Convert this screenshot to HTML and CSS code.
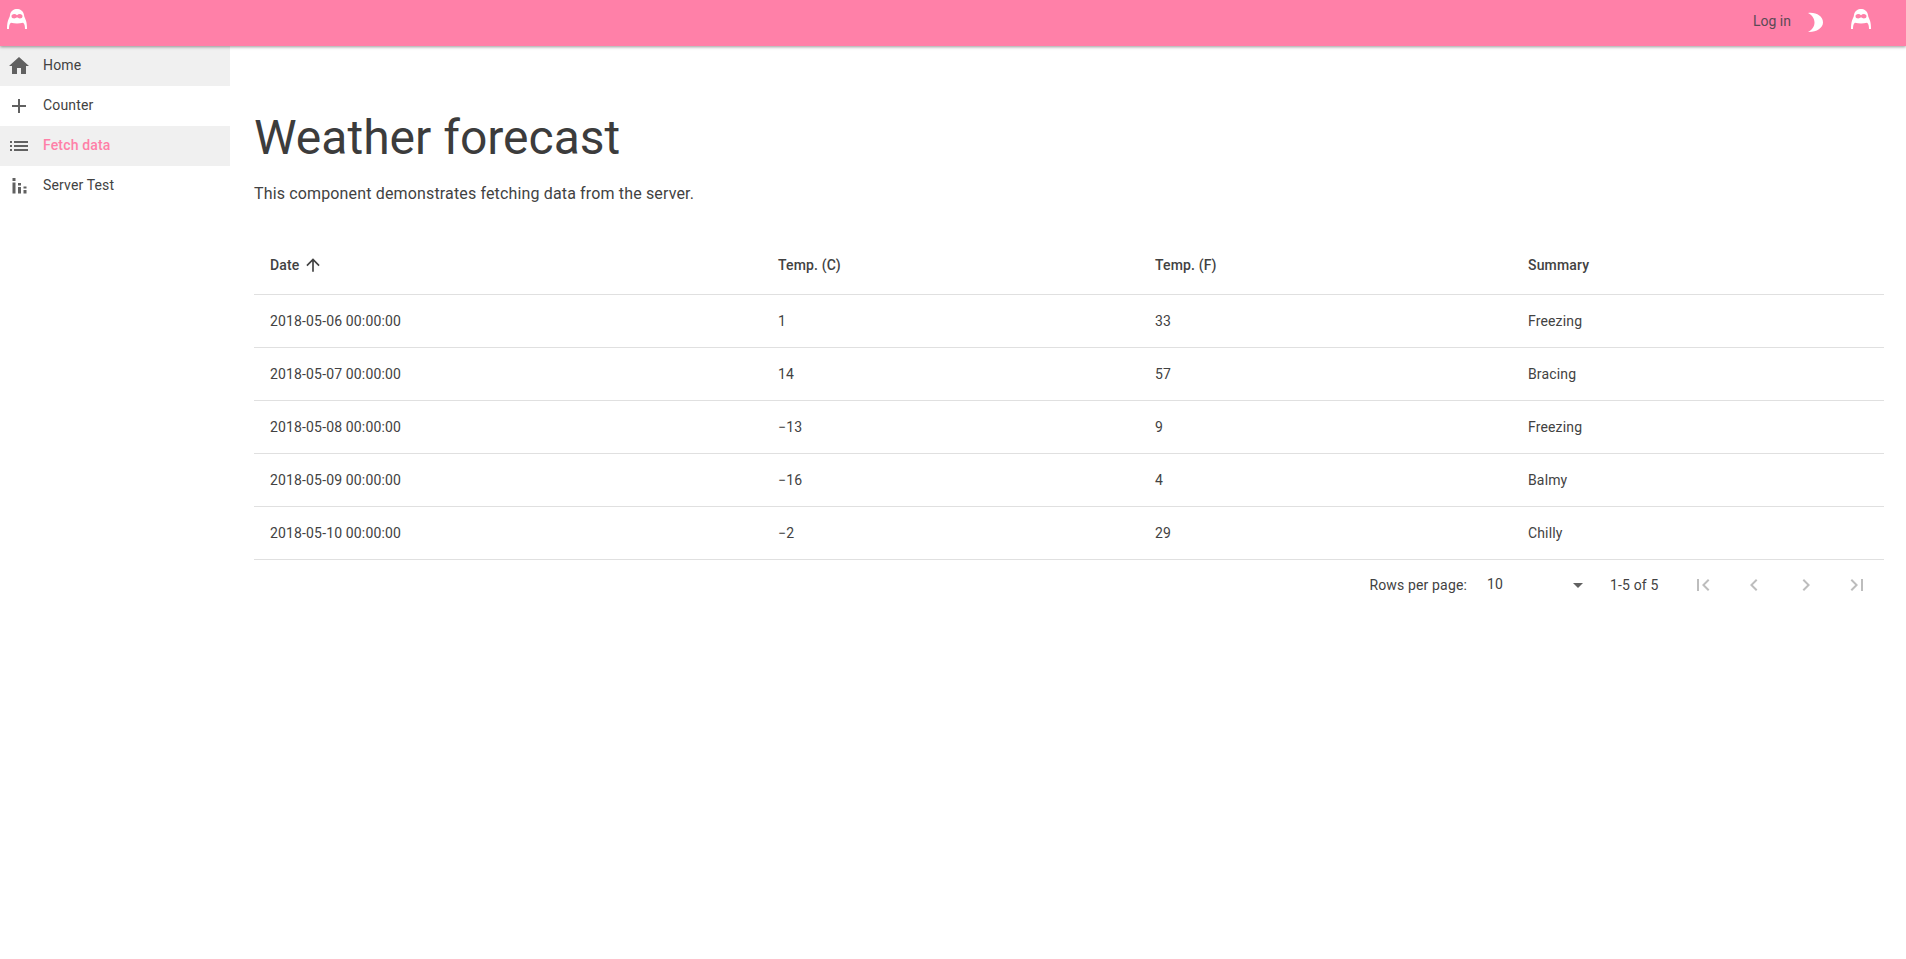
FILE: index.html
```html
<!DOCTYPE html>
<html lang="en">
<head>
  <meta charset="UTF-8" />
  <title>Weather forecast</title>
  <link rel="stylesheet" href="styles.css">
</head>
<body>

  <svg class="defs" width="0" height="0">
    <symbol id="penguin" viewBox="0 0 20 20">
      <path fill="#fff" fill-rule="evenodd" d="M10 0C7 0 3.600 1.800 3 6 2.700 8.300 1.500 10 .9 12 .2 14 0 17 0 20H2C2 17 2.300 15 4 13.700 6 14.300 8 14.500 10 14.500S14 14.300 16 13.700C17.700 15 18 17 18 20H20C20 17 19.800 14 19.100 12 18.500 10 17.300 8.300 17 6 16.400 1.800 13 0 10 0ZM7.200 5C8.200 5 9.200 5.500 10 6.200 10.800 5.500 11.800 5 12.800 5 14.400 5 15.500 6 15.500 7.200 15.500 8.500 14.400 9.500 12.800 9.500 11.800 9.500 10.800 9 10 8.300 9.200 9 8.200 9.500 7.200 9.500 5.600 9.500 4.500 8.500 4.500 7.200 4.500 6 5.600 5 7.200 5Z"/>
    </symbol>
  </svg>

  <header class="appbar">
    <svg class="logo logo-left"><use href="#penguin"/></svg>
    <span class="spacer"></span>
    <a class="login">Log in</a>
    <svg class="moon" viewBox="0 0 24 24"><path fill="#fff" d="M4 3C12 2 19 6 19 12.500 19 18 12 22.500 4 22 8 20 10.500 16.500 10.500 12.500 10.500 8.500 8 5 4 3Z"/></svg>
    <svg class="logo logo-right"><use href="#penguin"/></svg>
  </header>

  <div class="layout">
    <nav class="sidebar">
      <a class="nav-item selected">
        <svg class="nav-icon" viewBox="0 0 24 24"><path d="M10 20v-6h4v6h5v-8h3L12 3 2 12h3v8z"/></svg>
        <span>Home</span>
      </a>
      <a class="nav-item">
        <svg class="nav-icon" viewBox="0 0 24 24"><path d="M19 13h-6v6h-2v-6H5v-2h6V5h2v6h6v2z"/></svg>
        <span>Counter</span>
      </a>
      <a class="nav-item selected active">
        <svg class="nav-icon" viewBox="0 0 24 24"><path d="M3 13h2v-2H3v2zm0 4h2v-2H3v2zm0-8h2V7H3v2zm4 4h14v-2H7v2zm0 4h14v-2H7v2zM7 7v2h14V7H7z"/></svg>
        <span>Fetch data</span>
      </a>
      <a class="nav-item">
        <svg class="nav-icon" viewBox="0 0 24 24"><path d="M5.500 4h3v3h-3zM5.500 8.500h3v11h-3zM11 9h3v2.500h-3zM11 13h3v6.500h-3zM16.500 12.500h3v2h-3zM16.500 16h3v3.500h-3z"/></svg>
        <span>Server Test</span>
      </a>
    </nav>

    <main class="content">
      <h1>Weather forecast</h1>
      <p class="intro">This component demonstrates fetching data from the server.</p>

      <table class="grid">
        <thead>
          <tr>
            <th class="col-date">Date <svg class="sort" viewBox="0 0 24 24"><path d="M4 12l1.410 1.410L11 7.830V20h2V7.830l5.580 5.590L20 12l-8-8-8 8z"/></svg></th>
            <th class="col-c">Temp. (C)</th>
            <th class="col-f">Temp. (F)</th>
            <th>Summary</th>
          </tr>
        </thead>
        <tbody>
          <tr><td>2018-05-06 00:00:00</td><td>1</td><td>33</td><td>Freezing</td></tr>
          <tr><td>2018-05-07 00:00:00</td><td>14</td><td>57</td><td>Bracing</td></tr>
          <tr><td>2018-05-08 00:00:00</td><td>−13</td><td>9</td><td>Freezing</td></tr>
          <tr><td>2018-05-09 00:00:00</td><td>−16</td><td>4</td><td>Balmy</td></tr>
          <tr><td>2018-05-10 00:00:00</td><td>−2</td><td>29</td><td>Chilly</td></tr>
        </tbody>
      </table>

      <div class="pager">
        <span>Rows per page:</span>
        <div class="page-size">
          <span>10</span>
          <svg class="caret" viewBox="0 0 24 24"><path d="M7 10l5 5 5-5z"/></svg>
        </div>
        <span class="page-count">1-5 of 5</span>
        <svg class="page-btn" viewBox="0 0 24 24"><path d="M18.410 16.590L13.820 12l4.590-4.590L17 6l-6 6 6 6zM6 6h2v12H6z"/></svg>
        <svg class="page-btn" viewBox="0 0 24 24"><path d="M15.410 7.410L14 6l-6 6 6 6 1.410-1.410L10.830 12z"/></svg>
        <svg class="page-btn" viewBox="0 0 24 24"><path d="M10 6L8.590 7.410 13.170 12l-4.580 4.590L10 18l6-6z"/></svg>
        <svg class="page-btn" viewBox="0 0 24 24"><path d="M5.590 7.410L10.180 12l-4.590 4.590L7 18l6-6-6-6zM16 6h2v12h-2z"/></svg>
      </div>
    </main>
  </div>

</body>
</html>
```

FILE: styles.css
```css
body {
  margin: 0;
  font-family: Roboto, sans-serif;
  font-size: 14px;
  letter-spacing: 0.01071em;
  color: #424242;
  background-color: #fff;
}

.defs {
  display: block;
  height: 0;
}

.appbar {
  display: flex;
  align-items: center;
  height: 46px;
  background-color: #ff80a8;
  box-shadow: 0 1px 3px rgba(0, 0, 0, 0.4);
  position: relative;
  z-index: 2;
}

.spacer {
  flex: 1;
}

.logo {
  width: 20px;
  height: 20px;
  margin-bottom: 8px;
}

.logo-left {
  margin-left: 7px;
}

.logo-right {
  margin-left: 23px;
  margin-right: 35px;
}

.login {
  color: #5b4a55;
  font-size: 14px;
  letter-spacing: 0;
  margin-bottom: 4px;
}

.moon {
  width: 24px;
  height: 24px;
  margin-left: 13px;
  margin-bottom: 2px;
}

.layout {
  display: flex;
}

.sidebar {
  width: 230px;
  flex-shrink: 0;
}

.nav-item {
  display: flex;
  align-items: center;
  height: 40px;
  padding-left: 7px;
  color: #424242;
}

.nav-item span {
  margin-bottom: 2px;
}

.nav-item.selected {
  background-color: #f0f0f0;
}

.nav-item.active span {
  color: #ff80a8;
  font-weight: 500;
}

.nav-icon {
  width: 24px;
  height: 24px;
  margin-right: 12px;
  fill: #616161;
}

.content {
  flex: 1;
  padding: 0 22px 0 24px;
}

h1 {
  font-size: 48px;
  font-weight: 400;
  line-height: 56px;
  letter-spacing: 0;
  color: #3c3c3c;
  margin: 64px 0 0;
}

.intro {
  font-size: 16px;
  line-height: 24px;
  letter-spacing: 0.00938em;
  margin: 16px 0 0;
}

.grid {
  width: 100%;
  border-collapse: collapse;
  margin-top: 30px;
  table-layout: fixed;
}

.grid th, .grid td {
  padding: 0 16px;
  text-align: left;
  border-bottom: 1px solid #e0e0e0;
}

.grid th {
  height: 58px;
  font-weight: 500;
}

.grid td {
  height: 52px;
}

.col-date {
  width: 476px;
}

.col-c {
  width: 345px;
}

.col-f {
  width: 341px;
}

.sort {
  width: 20px;
  height: 20px;
  fill: #424242;
  vertical-align: -5px;
}

.pager {
  display: flex;
  align-items: center;
  justify-content: flex-end;
  height: 50px;
  padding-right: 15px;
}

.page-size {
  display: flex;
  align-items: center;
  justify-content: space-between;
  width: 103px;
  margin-left: 20px;
}

.page-size span {
  margin-top: -2px;
}

.caret {
  width: 24px;
  height: 24px;
  fill: #616161;
}

.page-count {
  margin-left: 20px;
  margin-right: 32px;
}

.page-btn {
  width: 24px;
  height: 24px;
  fill: #bdbdbd;
  margin-left: 27.5px;
}

.page-count + .page-btn {
  margin-left: 0;
}
```
